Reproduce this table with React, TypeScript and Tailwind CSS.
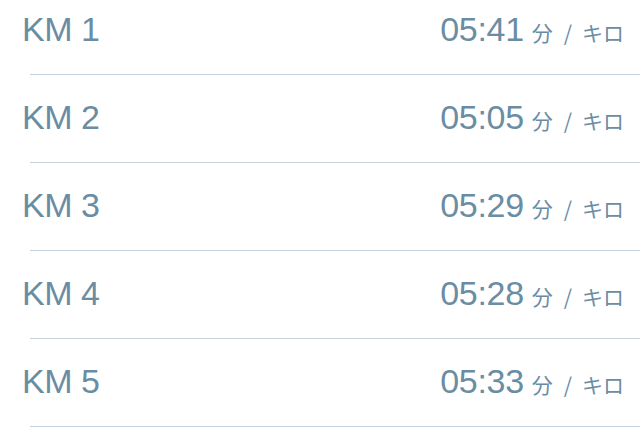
import React from "react";

const splits = [
  { km: 1, pace: "05:41" },
  { km: 2, pace: "05:05" },
  { km: 3, pace: "05:29" },
  { km: 4, pace: "05:28" },
  { km: 5, pace: "05:33" },
];

export default function App() {
  return (
    <div className="w-[640px] h-[431px] overflow-hidden bg-white font-['Liberation_Sans','Noto_Sans_CJK_JP',sans-serif] text-[#6a8da4]">
      <div className="-mt-[13px]">
        {splits.map((s) => (
          <div key={s.km}>
            <div className="h-[87px] flex items-center justify-between pl-[22px] pr-[16px] pb-[4px]">
              <span className="text-[34px] leading-none tracking-[-0.5px]">KM {s.km}</span>
              <span className="flex items-baseline">
                <span className="text-[34px] leading-none tracking-[-0.3px]">{s.pace}</span>
                <span className="ml-[8px] flex items-baseline text-[21px] leading-none font-['Noto_Sans_CJK_JP',sans-serif]">
                  <span>分</span>
                  <span className="ml-[11px] mr-[10px]">/</span>
                  <span>キロ</span>
                </span>
              </span>
            </div>
            <div className="ml-[30px] h-px bg-[#c6d4e0]" />
          </div>
        ))}
      </div>
    </div>
  );
}
